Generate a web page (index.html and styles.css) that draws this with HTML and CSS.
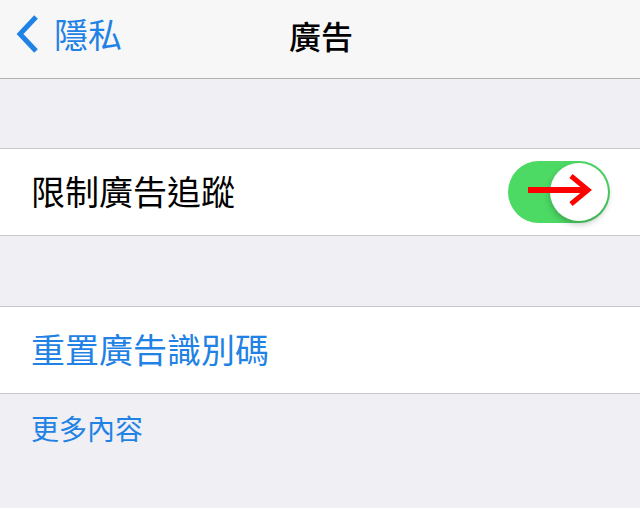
FILE: index.html
```html
<!DOCTYPE html>
<html lang="zh-Hant">
<head>
    <meta charset="UTF-8">
    <title>廣告</title>
    <link rel="stylesheet" href="styles.css">
</head>
<body>
    <header class="navbar">
        <a class="back" href="#">
            <svg class="back-icon" width="26" height="40" viewBox="0 0 26 40">
                <polyline points="21,3 5,20 21,37" fill="none" stroke="#1f82e4" stroke-width="5" stroke-linecap="butt" stroke-linejoin="miter"/>
            </svg>
            <span>隱私</span>
        </a>
        <h1 class="title">廣告</h1>
    </header>

    <div class="spacer"></div>

    <!-- Limit ad tracking -->
    <section class="group">
        <div class="row">
            <span class="label">限制廣告追蹤</span>
            <div class="switch">
                <div class="knob"></div>
                <svg class="arrow" width="64" height="34" viewBox="0 0 64 34">
                    <line x1="0" y1="17" x2="58" y2="17" stroke="#ff0000" stroke-width="6"/>
                    <polyline points="43,3 60,17 43,31" fill="none" stroke="#ff0000" stroke-width="5"/>
                </svg>
            </div>
        </div>
    </section>

    <div class="spacer spacer-mid"></div>

    <section class="group">
        <div class="row">
            <span class="label link">重置廣告識別碼</span>
        </div>
    </section>

    <p class="more">更多內容</p>
</body>
</html>
```

FILE: styles.css
```css
:root {
    --ios-blue: #1f82e4;
    --ios-green: #4cd964;
    --group-bg: #efeff4;
    --nav-bg: #f7f7f8;
    --hairline: #c8c7cc;
}

* {
    box-sizing: border-box;
    margin: 0;
    padding: 0;
}

body {
    background: var(--group-bg);
    font-family: "Noto Sans CJK TC", "Noto Sans", sans-serif;
    color: #000;
    width: 640px;
    height: 508px;
    overflow: hidden;
}

.navbar {
    height: 79px;
    background: var(--nav-bg);
    border-bottom: 1px solid #b2b2b2;
    position: relative;
    display: flex;
    align-items: center;
    justify-content: center;
}

.back {
    position: absolute;
    left: 15px;
    top: 14px;
    display: flex;
    align-items: center;
    gap: 13px;
    text-decoration: none;
    color: var(--ios-blue);
    font-size: 34px;
    line-height: 40px;
}

.title {
    font-size: 32px;
    font-weight: 500;
    line-height: 40px;
    margin-top: -8px;
    margin-left: 2px;
}

.spacer {
    height: 69px;
}

.spacer-mid {
    height: 70px;
}

.group {
    background: #fff;
    border-top: 1px solid var(--hairline);
    border-bottom: 1px solid var(--hairline);
}

.row {
    height: 86px;
    display: flex;
    align-items: center;
    justify-content: space-between;
    padding: 0 30px 0 31px;
}

.label {
    font-size: 34px;
    line-height: 40px;
    margin-top: -2px;
}

.label.link {
    color: var(--ios-blue);
}

.switch {
    width: 102px;
    height: 62px;
    border-radius: 31px;
    background: var(--ios-green);
    position: relative;
}

.knob {
    position: absolute;
    right: 2px;
    top: 2px;
    width: 58px;
    height: 58px;
    border-radius: 50%;
    background: #fff;
    box-shadow: 0 3px 6px rgba(0, 0, 0, 0.25);
}

.arrow {
    position: absolute;
    left: 20px;
    top: 12px;
}

.more {
    font-size: 28px;
    line-height: 36px;
    color: var(--ios-blue);
    padding: 16px 0 0 31px;
}
```
